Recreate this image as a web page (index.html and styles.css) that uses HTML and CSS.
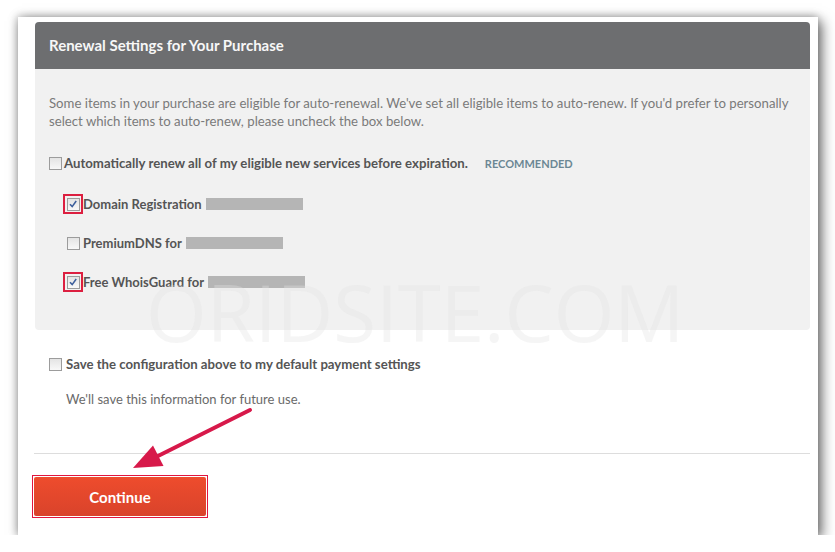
FILE: index.html
```html
<!DOCTYPE html>
<html lang="en">

<head>
    <meta charset="UTF-8">
    <meta name="viewport" content="width=device-width, initial-scale=1.0">
    <title>Renewal Settings</title>
    <link rel="stylesheet" href="styles.css">
</head>

<body>
    <div class="card">
        <div class="panel">
            <div class="panel-header">Renewal Settings for Your Purchase</div>
            <div class="panel-body">
                <p class="intro">Some items in your purchase are eligible for auto-renewal. We've set all eligible items to auto-renew. If you'd prefer to personally select which items to auto-renew, please uncheck the box below.</p>

                <div class="option main-option">
                    <span class="box"></span>
                    <span class="label">Automatically renew all of my eligible new services before expiration.</span>
                    <span class="recommended">RECOMMENDED</span>
                </div>

                <div class="sub-list">
                    <div class="option sub-option">
                        <span class="slot marked">
                            <span class="box checked">
                                <svg viewBox="0 0 10 10" width="10" height="10"><path d="M2 5.2 L4.2 7.6 L8.2 2" fill="none" stroke="#3d5f9c" stroke-width="1.6" /></svg>
                            </span>
                        </span>
                        <span class="label">Domain Registration</span>
                        <span class="redacted"></span>
                    </div>
                    <div class="option sub-option">
                        <span class="slot">
                            <span class="box"></span>
                        </span>
                        <span class="label">PremiumDNS for</span>
                        <span class="redacted"></span>
                    </div>
                    <div class="option sub-option">
                        <span class="slot marked">
                            <span class="box checked">
                                <svg viewBox="0 0 10 10" width="10" height="10"><path d="M2 5.2 L4.2 7.6 L8.2 2" fill="none" stroke="#3d5f9c" stroke-width="1.6" /></svg>
                            </span>
                        </span>
                        <span class="label">Free WhoisGuard for</span>
                        <span class="redacted"></span>
                    </div>
                </div>
            </div>
        </div>

        <div class="save-section">
            <div class="option save-option">
                <span class="box"></span>
                <span class="label">Save the configuration above to my default payment settings</span>
            </div>
            <p class="note">We'll save this information for future use.</p>
        </div>

        <hr class="divider">

        <div class="actions">
            <span class="button-outline"><button class="continue">Continue</button></span>
        </div>

        <div class="watermark">ORIDSITE.COM</div>

        <svg class="arrow" width="140" height="80" viewBox="0 0 140 80">
            <line x1="130" y1="10" x2="36" y2="57" stroke="#d7194a" stroke-width="4" stroke-linecap="round" />
            <polygon points="13,68 33,45.5 43.5,66" fill="#d7194a" />
        </svg>
    </div>
</body>

</html>
```

FILE: styles.css
```css
body {
    margin: 0;
    background-color: #ffffff;
    font-family: Lato, "Open Sans", Arial, sans-serif;
}

.card {
    position: relative;
    width: 800px;
    height: 518px;
    margin: 17px 0 0 18px;
    padding: 5px 8px 0 17px;
    box-sizing: border-box;
    background-color: #ffffff;
    box-shadow: 4px 4px 12px rgba(0, 0, 0, 0.55), -1px -1px 8px rgba(0, 0, 0, 0.25);
}

.panel {
    background-color: #f1f1f1;
    border-radius: 4px;
}

.panel-header {
    height: 47px;
    padding-left: 14px;
    line-height: 47px;
    background-color: #6d6e70;
    color: #f7f7f7;
    font-size: 15px;
    font-weight: bold;
    border-radius: 4px 4px 0 0;
}

.panel-body {
    padding: 25px 14px 38px 14px;
}

.intro {
    margin: 0;
    font-size: 13.2px;
    line-height: 18px;
    color: #7a7a7a;
}

.option {
    display: flex;
    align-items: center;
    font-size: 13.2px;
    font-weight: bold;
    color: #555555;
}

.main-option {
    height: 18px;
    margin-top: 24px;
}

.main-option .box {
    margin-right: 2px;
}

.recommended {
    margin-left: 17px;
    font-size: 11px;
    color: #6b8794;
}

.box {
    display: inline-flex;
    align-items: center;
    justify-content: center;
    width: 11px;
    height: 11px;
    border: 1px solid #9c9c9c;
    background: linear-gradient(#e4e4e4, #f8f8f8);
    box-sizing: content-box;
}

.sub-list {
    display: flex;
    flex-direction: column;
    gap: 19px;
    margin-top: 22px;
    padding-left: 14px;
}

.sub-option {
    height: 20px;
    font-size: 13px;
}

.slot {
    display: flex;
    align-items: center;
    justify-content: center;
    width: 20px;
    height: 20px;
    box-sizing: border-box;
}

.slot.marked {
    border: 2px solid #dc1f40;
}

.redacted {
    display: inline-block;
    width: 97px;
    height: 12px;
    margin-left: 4px;
    background-color: #b5b5b5;
}

.save-section {
    padding: 26px 14px 0 14px;
}

.save-option .box {
    margin-right: 4px;
}

.note {
    margin: 19px 0 0 17px;
    font-size: 13px;
    color: #6a6a6a;
}

.divider {
    margin: 46px 0 0 -1px;
    border: none;
    border-top: 1px solid #dddddd;
}

.actions {
    padding-top: 21px;
    margin-left: -3px;
}

.button-outline {
    display: inline-block;
    padding: 1px;
    border: 1px solid #e0163f;
    background-color: #ffffff;
}

.continue {
    display: block;
    width: 172px;
    height: 39px;
    border: none;
    border-radius: 2px;
    background: linear-gradient(#ee4c2d, #d9432b);
    color: #ffffff;
    font-family: Lato, "Open Sans", Arial, sans-serif;
    font-size: 15px;
    font-weight: bold;
    cursor: pointer;
}

.watermark {
    position: absolute;
    left: 128px;
    top: 256px;
    font-family: "Open Sans", Lato, sans-serif;
    font-weight: 400;
    font-size: 78px;
    line-height: 1;
    color: rgba(225, 225, 225, 0.35);
    pointer-events: none;
}

.arrow {
    position: absolute;
    left: 102px;
    top: 383px;
}
```
